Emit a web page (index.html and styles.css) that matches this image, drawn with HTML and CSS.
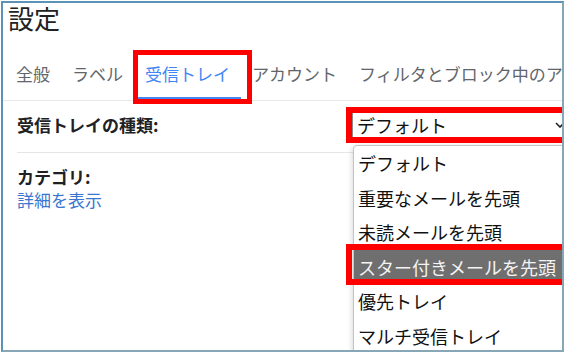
FILE: index.html
```html
<!DOCTYPE html>
<html lang="ja">
<head>
    <meta charset="UTF-8">
    <title>設定</title>
    <link rel="stylesheet" href="styles.css">
</head>
<body>
    <div class="window">
        <div class="title">設定</div>

        <div class="tabs">
            <span class="tab">全般</span>
            <span class="tab">ラベル</span>
            <span class="tab active">受信トレイ</span>
            <span class="tab">アカウント</span>
            <span class="tab">フィルタとブロック中のアドレス</span>
        </div>

        <div class="row">
            <div class="label">受信トレイの種類:</div>
            <div class="select">
                <span>デフォルト</span>
                <svg class="chevron" width="10" height="6" viewBox="0 0 10 6">
                    <polyline points="1,1 5,5 9,1" fill="none" stroke="#222" stroke-width="1.6"/>
                </svg>
            </div>
        </div>

        <div class="row category">
            <div class="label">カテゴリ:</div>
            <a class="link">詳細を表示</a>
        </div>

        <!-- open dropdown of the select -->
        <ul class="dropdown">
            <li>デフォルト</li>
            <li>重要なメールを先頭</li>
            <li>未読メールを先頭</li>
            <li class="hover">スター付きメールを先頭</li>
            <li>優先トレイ</li>
            <li>マルチ受信トレイ</li>
        </ul>

        <!-- red annotation boxes -->
        <div class="mark mark-tab"></div>
        <div class="mark mark-select"></div>
        <div class="mark mark-option"></div>
    </div>
</body>
</html>
```

FILE: styles.css
```css
body {
    margin: 0;
    background: #fff;
    font-family: "Noto Sans CJK JP", "Noto Sans", sans-serif;
    color: #202124;
}
.window {
    position: relative;
    margin: 1px 0 0 1px;
    width: 559px;
    height: 347px;
    border: 2px solid;
    border-color: #5b92b6 #87a6b6 #87a6b6 #5b92b6;
    overflow: hidden;
}
.title {
    font-size: 26px;
    line-height: 30px;
    padding-left: 5px;
    color: #222;
}
.tabs {
    display: flex;
    white-space: nowrap;
    padding: 29px 0 0 2px;
    border-bottom: 1px solid #e8e8e8;
}
.tab {
    flex-shrink: 0;
    font-size: 17px;
    line-height: 24px;
    padding: 0 11px 11px;
    border-bottom: 3px solid transparent;
    color: #62666a;
}
.tab.active {
    color: #4285f4;
    border-bottom-color: #4285f4;
}
.row {
    display: flex;
    align-items: center;
    margin-left: 14px;
    padding: 11px 0 14px;
    border-bottom: 1px solid #e6e6e6;
}
.label {
    width: 335px;
    flex-shrink: 0;
    font-size: 17px;
    font-weight: bold;
    line-height: 24px;
}
.select {
    display: flex;
    align-items: center;
    flex-shrink: 0;
    width: 222px;
    height: 26px;
    box-sizing: border-box;
    padding: 0 8px 0 4px;
    border: 1px solid #8a8a8a;
    font-size: 18px;
    color: #111;
}
.chevron {
    margin-left: auto;
}
.category {
    display: block;
    padding-top: 12px;
    border-bottom: none;
}
.category .label {
    line-height: 23px;
}
.link {
    display: block;
    font-size: 17px;
    line-height: 23px;
    color: #3a76d0;
}
.dropdown {
    position: absolute;
    left: 350px;
    top: 142px;
    width: 230px;
    margin: 0;
    padding: 0;
    list-style: none;
    background: #fff;
    border: 1px solid #c4c4c4;
    border-radius: 4px;
    box-shadow: 0 2px 6px rgba(0,0,0,0.2);
}
.dropdown li {
    font-size: 18px;
    line-height: 34.5px;
    padding-left: 4px;
    color: #111;
    white-space: nowrap;
}
.dropdown li.hover {
    background: #6f6f6f;
    color: #f4f4f4;
}
.mark {
    position: absolute;
    border: 6px solid #ff0000;
    box-sizing: border-box;
}
.mark-tab {
    left: 130px;
    top: 47px;
    width: 119px;
    height: 54px;
    border-width: 5px;
}
.mark-select {
    left: 343px;
    top: 104px;
    width: 230px;
    height: 36px;
}
.mark-option {
    left: 343px;
    top: 241px;
    width: 230px;
    height: 41px;
}
```
